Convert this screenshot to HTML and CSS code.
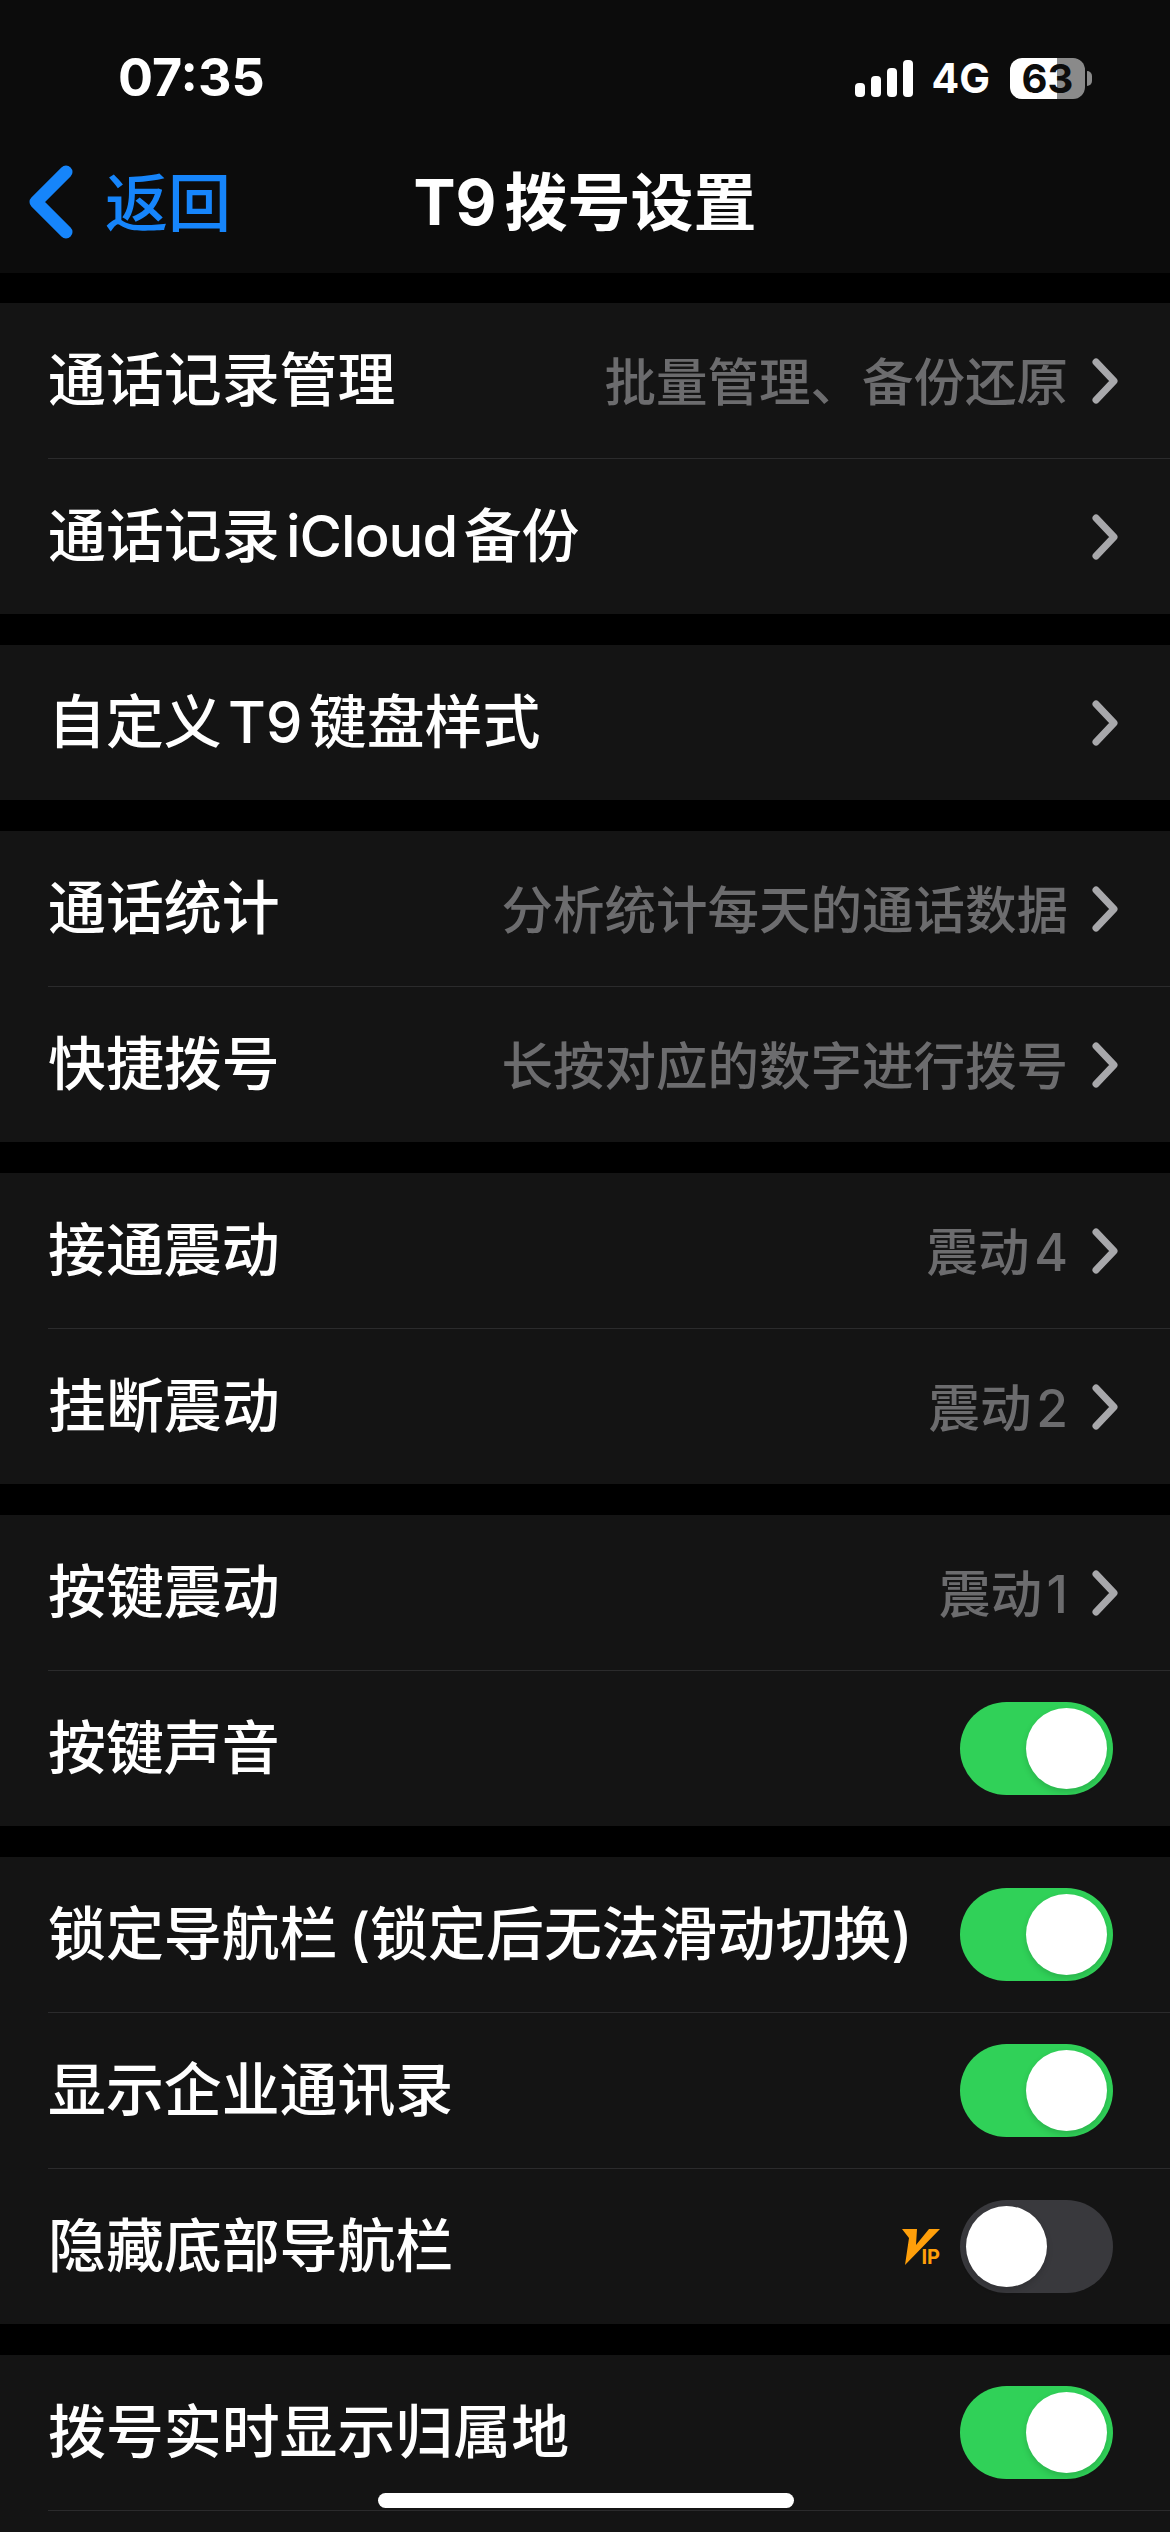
FILE: index.html
```html
<!DOCTYPE html>
<html lang="zh-CN">
<head>
    <meta charset="UTF-8">
    <meta name="viewport" content="width=device-width, initial-scale=1.0">
    <title>T9 拨号设置</title>
    <link rel="stylesheet" href="styles.css">
</head>
<body>
    <header class="top">
        <div class="status-bar">
            <span class="time">07:35</span>
            <div class="status-right">
                <div class="signal">
                    <i class="bar bar-1"></i><i class="bar bar-2"></i><i class="bar bar-3"></i><i class="bar bar-4"></i>
                </div>
                <span class="net">4G</span>
                <div class="battery"><span class="battery-level">63</span><i class="battery-tip"></i></div>
            </div>
        </div>
        <nav class="nav">
            <a class="back">
                <svg class="back-icon" viewBox="0 0 44 74"><path d="M37 7 L7 37 L37 67" fill="none" stroke="#1685fb" stroke-width="13" stroke-linecap="round" stroke-linejoin="round"/></svg>
                <span>返回</span>
            </a>
            <h1 class="title">T9 拨号设置</h1>
        </nav>
    </header>

    <main class="list">
        <section class="group">
            <div class="row"><span class="label">通话记录管理</span><span class="value">批量管理、备份还原</span><svg class="chevron" viewBox="0 0 26 46"><path d="M4 4 L22 23 L4 42"/></svg></div>
            <div class="row"><span class="label">通话记录 <span class="latin">iCloud</span> 备份</span><svg class="chevron" viewBox="0 0 26 46"><path d="M4 4 L22 23 L4 42"/></svg></div>
        </section>
        <section class="group">
            <div class="row"><span class="label">自定义 T9 键盘样式</span><svg class="chevron" viewBox="0 0 26 46"><path d="M4 4 L22 23 L4 42"/></svg></div>
        </section>
        <section class="group">
            <div class="row"><span class="label">通话统计</span><span class="value">分析统计每天的通话数据</span><svg class="chevron" viewBox="0 0 26 46"><path d="M4 4 L22 23 L4 42"/></svg></div>
            <div class="row"><span class="label">快捷拨号</span><span class="value">长按对应的数字进行拨号</span><svg class="chevron" viewBox="0 0 26 46"><path d="M4 4 L22 23 L4 42"/></svg></div>
        </section>
        <section class="group">
            <div class="row"><span class="label">接通震动</span><span class="value">震动 4</span><svg class="chevron" viewBox="0 0 26 46"><path d="M4 4 L22 23 L4 42"/></svg></div>
            <div class="row"><span class="label">挂断震动</span><span class="value">震动 2</span><svg class="chevron" viewBox="0 0 26 46"><path d="M4 4 L22 23 L4 42"/></svg></div>
        </section>
        <section class="group">
            <div class="row"><span class="label">按键震动</span><span class="value">震动 1</span><svg class="chevron" viewBox="0 0 26 46"><path d="M4 4 L22 23 L4 42"/></svg></div>
            <div class="row"><span class="label">按键声音</span><span class="switch on"></span></div>
        </section>
        <section class="group">
            <div class="row"><span class="label label-wide">锁定导航栏 (锁定后无法滑动切换)</span><span class="switch on"></span></div>
            <div class="row"><span class="label">显示企业通讯录</span><span class="switch on"></span></div>
            <div class="row">
                <span class="label">隐藏底部导航栏</span>
                <span class="vip">
                    <svg class="vip-v" viewBox="0 0 38 36"><path d="M0 0 H15 L14 16 L27 0 H38 L3 36 L7 9 Z" fill="#ff9f0a"/></svg>
                    <span class="vip-text">IP</span>
                </span>
                <span class="switch"></span>
            </div>
        </section>
        <section class="group">
            <div class="row"><span class="label">拨号实时显示归属地</span><span class="switch on"></span></div>
            <div class="row row-cut"></div>
        </section>
    </main>

    <div class="home-indicator"></div>
</body>
</html>
```

FILE: styles.css
```css
* { box-sizing: border-box; }
html, body { margin: 0; padding: 0; }
body { position: relative; width: 1170px; height: 2532px; overflow: hidden; background: #000; color: #fff; font-family: Inter, "Noto Sans CJK SC", sans-serif; }

/* Шапка */
.top { height: 273px; background: #0c0c0c; }
.status-bar { display: flex; justify-content: space-between; align-items: center; height: 130px; padding: 26px 85px 0 118px; }
.time { font-size: 52px; font-weight: 700; line-height: 1; }
.status-right { display: flex; align-items: center; }
.signal { display: flex; align-items: flex-end; gap: 6px; height: 37px; }
.bar { display: block; width: 10px; background: #fff; border-radius: 4px; }
.bar-1 { height: 14px; }
.bar-2 { height: 21px; }
.bar-3 { height: 29px; }
.bar-4 { height: 37px; }
.net { margin: 0 20px 0 19px; font-size: 41px; font-weight: 700; line-height: 1; }
.battery { position: relative; width: 75px; height: 41px; border-radius: 12px; background: linear-gradient(90deg, #fff 63%, #8a8a8a 63%); }
.battery-level { display: block; color: #0c0c0c; font-size: 40px; font-weight: 700; line-height: 41px; text-align: center; }
.battery-tip { position: absolute; top: 13px; right: -7px; width: 5px; height: 15px; background: #8a8a8a; border-radius: 0 8px 8px 0; }

.nav { display: grid; grid-template-columns: 1fr auto 1fr; align-items: center; height: 143px; padding-left: 29px; }
.back { display: flex; align-items: center; gap: 32px; color: #1685fb; font-size: 63px; font-weight: 500; line-height: 1; }
.back span { padding-top: 4px; }
.back-icon { width: 44px; height: 74px; }
.title { margin: 0 0 0 -29px; padding-top: 2px; font-size: 63px; font-weight: 700; line-height: 1; word-spacing: -7px; }

/* Списки */
.list { display: flex; flex-direction: column; gap: 31px; padding-top: 30px; }
.group { background: #141414; }
.row { display: flex; align-items: center; height: 155px; margin-left: 48px; padding-right: 52px; font-size: 57.9px; font-weight: 500; }
.row + .row { height: 156px; border-top: 1px solid #2b2b2c; }
.row + .row-cut { height: 22px; }
.label { flex: 1; padding-bottom: 9px; white-space: nowrap; word-spacing: -9px; }
.label-wide { word-spacing: -4px; }
.latin { letter-spacing: -1px; }
.value { padding-bottom: 4px; color: #6c6c6e; font-size: 51.5px; font-weight: 500; word-spacing: -9px; white-space: nowrap; }
.chevron { flex: none; width: 26px; height: 46px; margin-left: 24px; }
.chevron path { fill: none; stroke: #a8a8ab; stroke-width: 7; stroke-linecap: round; stroke-linejoin: round; }

.switch { position: relative; flex: none; width: 153px; height: 93px; margin-right: 5px; background: #39393d; border-radius: 47px; }
.switch::after { content: ""; position: absolute; top: 6px; left: 6px; width: 81px; height: 81px; background: #fff; border-radius: 50%; box-shadow: 0 3px 6px rgba(0, 0, 0, 0.15); }
.switch.on { background: #30d158; }
.switch.on::after { left: 66px; }

.vip { position: relative; width: 38px; height: 36px; margin-right: 20px; }
.vip-v { display: block; width: 38px; height: 36px; }
.vip-text { position: absolute; right: 0; bottom: 0; color: #ff9f0a; font-size: 20px; font-weight: 700; line-height: 15px; }

.home-indicator { position: absolute; left: 378px; bottom: 24px; width: 416px; height: 15px; background: #fff; border-radius: 8px; }
```
